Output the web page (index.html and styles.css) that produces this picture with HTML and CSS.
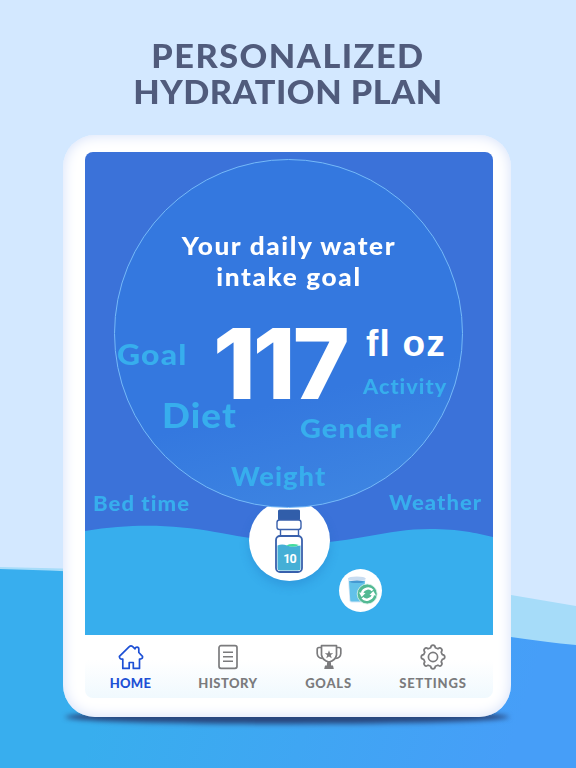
FILE: index.html
```
<!DOCTYPE html>
<html lang="en">
<head>
    <meta charset="UTF-8">
    <meta name="viewport" content="width=device-width, initial-scale=1.0">
    <title>Personalized Hydration Plan</title>
    <link rel="stylesheet" href="styles.css">
</head>
<body>
    <svg class="backdrop" viewBox="0 0 576 768">
        <defs>
            <linearGradient id="sea" gradientUnits="userSpaceOnUse" x1="130" y1="600" x2="520" y2="720">
                <stop offset="0" stop-color="#38aeee"/>
                <stop offset="1" stop-color="#469ef8"/>
            </linearGradient>
        </defs>
        <path fill="#a6dcf9" d="M0 567 C180 571 400 579 511 595 L576 606 V768 H0 Z"/>
        <path fill="url(#sea)" d="M0 569 C100 572 200 575 290 600 C370 622 450 630 511 637 Q545 642 576 645 V768 H0 Z"/>
    </svg>

    <h1><span class="wide">Personalized</span><br>Hydration Plan</h1>

    <div class="tablet">
        <div class="screen">
            <div class="goal-view">
                <svg class="waves" viewBox="0 0 408 483">
                    <path fill="#37aeed" d="M0 379 C50 371 90 373 130 380 C170 387 190 391 220 391 C270 391 300 377 345 377 C375 377 390 381 408 385 V483 H0 Z"/>
                </svg>

                <div class="bottle">
                    <svg width="30" height="66" viewBox="0 0 30 66">
                        <path fill="#fff" stroke="#3960ac" stroke-width="1.4" d="M6.500 18 V28 H24.500 V18"/>
                        <rect x="4" y="1.500" width="22" height="11" rx="1.500" fill="#315eaa"/>
                        <rect x="3" y="12" width="24" height="9.500" rx="2.500" fill="#fff" stroke="#3960ac" stroke-width="1.400"/>
                        <rect x="2" y="28" width="26" height="36" rx="4" fill="#fff" stroke="#3960ac" stroke-width="1.800"/>
                        <path fill="#45afd6" d="M3.500 37.500 Q8 35.700 13 37.500 T26.500 37.500 V60 Q26.500 62.500 24 62.500 H6 Q3.500 62.500 3.500 60 Z"/>
                        <path fill="#43dc9f" d="M12 37.500 Q18 34.800 25 37 Q20 40 12 37.500 Z"/>
                    </svg>
                    <span class="bottle-count">10</span>
                </div>

                <div class="circle"></div>

                <div class="goal">
                    <p class="goal-title">Your daily water<br>intake goal</p>
                    <div class="goal-value">
                        <span class="amount">117</span>
                        <span class="unit">fl oz</span>
                    </div>
                </div>

                <span class="word word-goal">Goal</span>
                <span class="word word-diet">Diet</span>
                <span class="word word-activity">Activity</span>
                <span class="word word-gender">Gender</span>
                <span class="word word-weight">Weight</span>
                <span class="word word-bed">Bed time</span>
                <span class="word word-weather">Weather</span>

                <div class="refill">
                    <svg width="43" height="43" viewBox="0 0 43 43">
                        <path fill="#d5e7f7" d="M9 9 L10.500 32 Q11 33.500 13 33.500 H22 Q24 33.500 24.500 32 L26.500 9 Z"/>
                        <path fill="#62c1e9" d="M10 12 H26 L24 31.500 Q23.700 32.500 22 32.500 H13 Q11.500 32.500 11.300 31.500 Z"/>
                        <ellipse cx="17.800" cy="9.500" rx="8.800" ry="2" fill="#c9dcf0"/>
                        <ellipse cx="18" cy="12.800" rx="7.300" ry="1.300" fill="#4599d2"/>
                        <circle cx="28.200" cy="25" r="10" fill="#53b993" stroke="#d9f2e8" stroke-width=".8"/>
                        <path fill="none" stroke="#fff" stroke-width="2.400" d="M23 24 C24.500 19 31 18 33.500 21.500"/>
                        <path fill="#fff" d="M20 23.500 L26.500 24 L22.700 28 Z"/>
                        <path fill="none" stroke="#fff" stroke-width="2.400" d="M34 26 C32.500 31 26 32 23.500 28.800"/>
                        <path fill="#fff" d="M37 26.500 L30.500 26 L34.300 22 Z"/>
                    </svg>
                </div>
            </div>

            <nav class="tabs">
                <a class="tab tab-home active">
                    <svg width="26" height="26" viewBox="0 0 26 26">
                        <path d="M4.800 24.400 V15 Q1.300 15.500 1.400 12.400 L11.300 2.600 Q13 1 14.700 2.600 L17 4.800 Q17.500 3.200 19 3.200 Q20.800 3.200 20.800 5 V8.500 L24.500 12.300 Q25 15.300 21.500 15 V24.400 H15.300 V18.500 H11.200 V24.400 Z"/>
                    </svg>
                    Home
                </a>
                <a class="tab tab-history">
                    <svg width="26" height="26" viewBox="0 0 26 26">
                        <rect x="4" y="1.700" width="18" height="22.600" rx="2"/>
                        <path d="M8 8.300 H18 M8 12.800 H18 M8 17.300 H18" stroke-width="1.400"/>
                    </svg>
                    History
                </a>
                <a class="tab tab-goals">
                    <svg width="26" height="26" viewBox="0 0 26 26">
                        <path d="M5.500 1.700 H20.500 V11 Q19.500 16.500 13 18 Q6.500 16.500 5.500 11 Z"/>
                        <path d="M5.500 3.500 H3 Q1.200 3.500 1.200 5.500 V9.500 Q1.500 14 6.500 14.500 M20.500 3.500 H23 Q24.800 3.500 24.800 5.500 V9.500 Q24.500 14 19.500 14.500"/>
                        <path class="solid" d="M13 6.200 L14.100 9.200 H17.300 L14.800 11.100 L15.700 14.200 L13 12.400 L10.300 14.200 L11.200 11.100 L8.700 9.200 H11.900 Z M11.200 18 H14.800 L15.200 21.500 H17 L17.800 25 H8.200 L9 21.500 H10.800 Z"/>
                    </svg>
                    Goals
                </a>
                <a class="tab tab-settings">
                    <svg width="26" height="26" viewBox="0 0 26 26">
                        <path d="M10.700 3.700 Q11 1.200 13 1.200 Q15 1.200 15.300 3.700 L17.900 4.800 Q19.900 3.200 21.300 4.700 Q22.800 6.100 21.200 8.100 L22.300 10.700 Q24.800 11 24.800 13 Q24.800 15 22.300 15.300 L21.200 17.900 Q22.800 19.900 21.300 21.300 Q19.900 22.800 17.900 21.200 L15.300 22.300 Q15 24.800 13 24.800 Q11 24.800 10.700 22.300 L8.100 21.200 Q6.100 22.800 4.700 21.300 Q3.200 19.900 4.800 17.900 L3.700 15.300 Q1.200 15 1.200 13 Q1.200 11 3.700 10.700 L4.800 8.100 Q3.200 6.100 4.700 4.700 Q6.100 3.200 8.100 4.800 Z"/>
                        <circle cx="13" cy="13" r="4.600"/>
                    </svg>
                    Settings
                </a>
            </nav>
        </div>
    </div>
</body>
</html>
```
FILE: styles.css
```
* {
    box-sizing: border-box;
}

body {
    margin: 0;
    height: 768px;
    overflow: hidden;
    background-color: #d3e8ff;
    font-family: Lato, "Liberation Sans", sans-serif;
}

.backdrop {
    position: absolute;
    top: 0;
    left: 0;
    width: 576px;
    height: 768px;
    z-index: -1;
}

h1 {
    margin: 0;
    padding-top: 38px;
    height: 135px;
    color: #505b7c;
    font-size: 32px;
    font-weight: 900;
    line-height: 36px;
    letter-spacing: 0.500px;
    text-align: center;
    text-transform: uppercase;
    transform: scaleX(1.07);
}

h1 .wide {
    letter-spacing: 1.400px;
}

.tablet {
    position: relative;
    width: 448px;
    height: 582px;
    margin-left: 63px;
    padding: 17px 22px 19px;
    border-radius: 32px;
    background-color: #fff;
    box-shadow: inset 0 0 14px #d3dff9;
}

/* dark shadow under the tablet */
.tablet::after {
    content: "";
    position: absolute;
    z-index: -1;
    left: 2px;
    right: 2px;
    bottom: -7px;
    height: 14px;
    border-radius: 50% / 7px;
    background-color: #29477e;
    filter: blur(2.500px);
}

.screen {
    display: flex;
    flex-direction: column;
    width: 408px;
    height: 546px;
    border-radius: 8px;
    overflow: hidden;
}

.goal-view {
    position: relative;
    height: 483px;
    background-color: #3b72d9;
}

.waves {
    position: absolute;
    top: 0;
    left: 0;
    width: 408px;
    height: 483px;
}

.circle {
    position: absolute;
    top: 6.500px;
    left: 28.500px;
    width: 349px;
    height: 349px;
    border: 1px solid #75b9f8;
    border-radius: 50%;
    background: linear-gradient(165deg, #3478df 65%, #4088e2 100%);
}

.bottle {
    position: absolute;
    top: 348px;
    left: 164px;
    width: 81px;
    height: 81px;
    padding: 8px 0 0 25px;
    border-radius: 50%;
    background-color: #fff;
    box-shadow: 0 5px 10px rgba(30, 110, 190, 0.3);
}

.bottle-count {
    position: absolute;
    left: 0;
    top: 52px;
    width: 81px;
    color: #fff;
    font-family: Roboto, sans-serif;
    font-size: 12.500px;
    font-weight: bold;
    line-height: 14px;
    letter-spacing: -1px;
    text-align: center;
}

.refill {
    position: absolute;
    top: 417px;
    left: 254px;
    width: 43px;
    height: 43px;
    border-radius: 50%;
    background-color: #fff;
}

.goal {
    position: relative;
    padding-top: 78px;
    color: #fff;
}

.goal-title {
    margin: 0;
    font-size: 24px;
    font-weight: 900;
    line-height: 31px;
    letter-spacing: 1.500px;
    text-align: center;
    transform: scaleX(1.09);
}

.goal-value {
    display: flex;
    align-items: flex-start;
    font-family: "Liberation Sans", sans-serif;
    font-weight: bold;
}

.amount {
    width: 153px;
    margin: 21px 0 0 128px;
    font-family: Inter, sans-serif;
    font-size: 97px;
    font-weight: 800;
    line-height: 101px;
    letter-spacing: -3px;
}

.unit {
    margin-top: 30px;
    font-size: 37px;
    line-height: 44px;
    letter-spacing: 1.200px;
    white-space: nowrap;
}

.word {
    position: absolute;
    color: #37aeed;
    font-weight: 900;
    line-height: 1;
    letter-spacing: 1px;
    white-space: nowrap;
    transform: scaleX(1.05);
    transform-origin: left;
}

.word-goal {
    left: 32px;
    top: 188px;
    font-size: 28px;
    transform: scaleX(1.14);
}

.word-diet {
    left: 77px;
    top: 246px;
    font-size: 34px;
    transform: scaleX(1.08);
}

.word-activity {
    left: 278px;
    top: 223px;
    font-size: 21px;
    transform: scaleX(1.03);
}

.word-gender {
    left: 215px;
    top: 263px;
    font-size: 26px;
    transform: scaleX(1.11);
}

.word-weight {
    left: 146px;
    top: 311px;
    font-size: 26px;
}

.word-bed {
    left: 8px;
    top: 340px;
    font-size: 21px;
}

.word-weather {
    left: 304px;
    top: 339px;
    font-size: 21px;
}

.tabs {
    display: flex;
    flex: 1;
    padding-top: 9px;
    background: linear-gradient(#fff 40%, #f0f9fe);
}

.tab {
    display: flex;
    flex-direction: column;
    align-items: center;
    gap: 5px;
    color: #7b7b7d;
    font-size: 13px;
    font-weight: 900;
    line-height: 16px;
    letter-spacing: 0.300px;
    text-transform: uppercase;
}

.tab-home {
    width: 91px;
}

.tab-history {
    width: 104px;
    letter-spacing: 0.500px;
}

.tab-goals {
    width: 97px;
    letter-spacing: 0.800px;
}

.tab-settings {
    width: 112px;
    letter-spacing: 0.800px;
}

.tab svg {
    fill: none;
    stroke: currentColor;
    stroke-width: 1.700;
    stroke-linejoin: round;
}

.tab .solid {
    fill: currentColor;
    stroke: none;
}

.tab.active {
    color: #1d50d5;
}
```
